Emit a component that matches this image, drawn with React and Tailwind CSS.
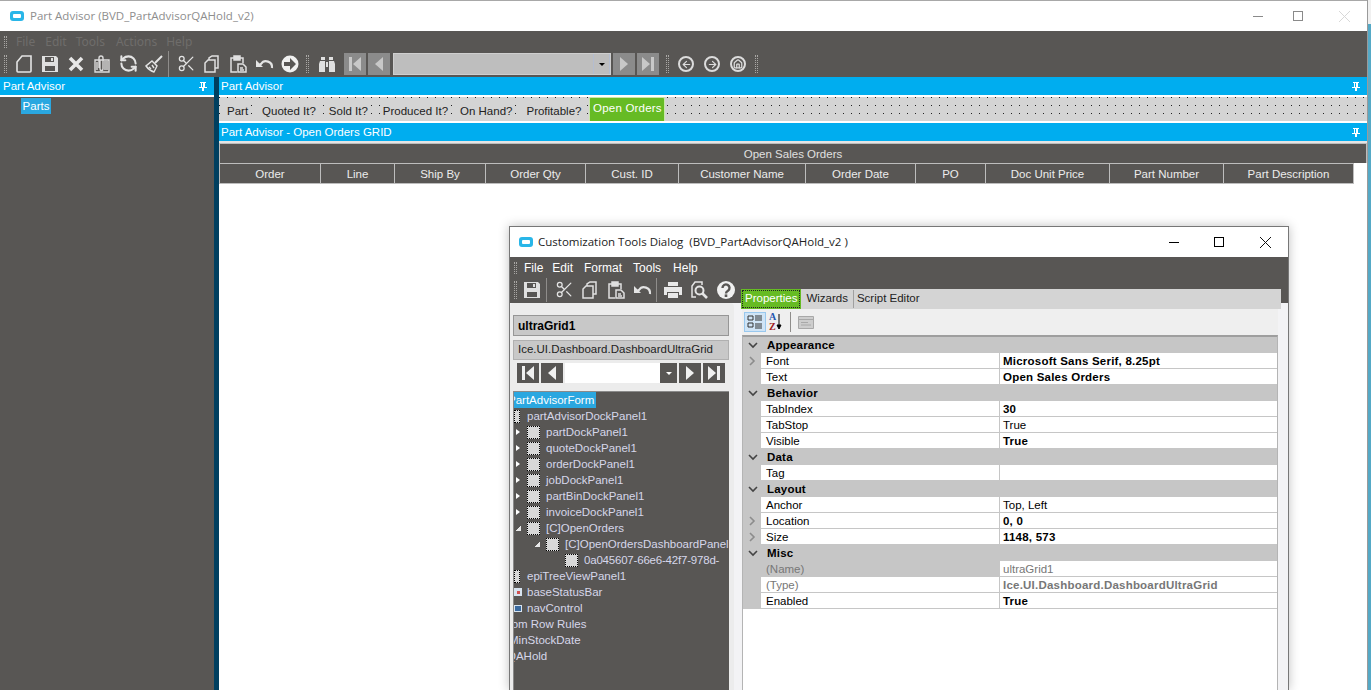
import React from 'react'
import { Scissors, RefreshCcw, ArrowLeft, ArrowRight, House } from 'lucide-react'

const ui = "font-['Liberation_Sans',Arial,sans-serif]"

const Grip = ({ className = '' }) => (
  <div className={`w-[3px] border-x border-dotted border-[#a9a7a5] ${className}`} />
)

const Sep = ({ className = '' }) => <div className={`w-px bg-[#8f8d8b] ${className}`} />

// toolbar glyphs, all on a 20 box
const NewIcon = () => (
  <svg width="20" height="20" viewBox="0 0 20 20" fill="none" stroke="#e4e4e4" strokeWidth="1.6">
    <path d="M8 2h9v15a1 1 0 0 1-1 1H4a1 1 0 0 1-1-1V8z" />
  </svg>
)
const SaveIcon = () => (
  <svg width="20" height="20" viewBox="0 0 20 20">
    <path fill="#e0e0e0" d="M2 2h14l2 2v14H2z" />
    <path fill="#585654" d="M5 3h9v5H5zM5 12h10v5H5z" />
    <path fill="#e0e0e0" d="M11 4h2v3h-2z" />
  </svg>
)
const CloseIcon = () => (
  <svg width="20" height="20" viewBox="0 0 20 20" stroke="#e8e8e8" strokeWidth="3.6">
    <path d="M4 4l12 12M16 4L4 16" />
  </svg>
)
const AttachIcon = () => (
  <svg width="20" height="20" viewBox="0 0 20 20" fill="none" stroke="#dcdcdc" strokeWidth="1.4">
    <path d="M3 6h14v12H3z" />
    <path d="M7 14V4a2 2 0 0 1 4 0v11a1.5 1.5 0 0 1-3 0V6" />
    <path d="M13 7v9M15 7v9M5 8v8" />
  </svg>
)
const BroomIcon = () => (
  <svg width="20" height="20" viewBox="0 0 20 20" fill="none" stroke="#e4e4e4" strokeWidth="1.4">
    <path d="M18 2l-7 7" strokeWidth="2" />
    <path d="M8 7l5 5-3 6c-3-1-6-3-8-6z" />
    <path d="M5 13l2 2M8 11l2 3" />
  </svg>
)
const CopyIcon = () => (
  <svg width="20" height="20" viewBox="0 0 20 20" fill="none" stroke="#e0e0e0" strokeWidth="1.5">
    <path d="M7 6V4l3-2h6v12h-3" />
    <path d="M6 6h7v12H3V9z" />
  </svg>
)
const PasteIcon = () => (
  <svg width="20" height="20" viewBox="0 0 20 20" fill="none" stroke="#e0e0e0" strokeWidth="1.5">
    <path d="M9 18H3V4h3M12 4h3v5" />
    <path d="M6 2h6v4H6z" fill="#e0e0e0" />
    <path d="M10 10h5l3 3v5h-8z" />
    <path d="M12 14h3M12 16h4" />
  </svg>
)
const UndoIcon = () => (
  <svg width="20" height="20" viewBox="0 0 20 20" fill="none" stroke="#e4e4e4" strokeWidth="2.2">
    <path d="M18 14a6 6 0 0 0-11-4L4 12" />
    <path d="M2 6v7h7" fill="#e4e4e4" stroke="none" />
  </svg>
)
const ForwardIcon = () => (
  <svg width="20" height="20" viewBox="0 0 20 20">
    <circle cx="10" cy="10" r="8.5" fill="#f0f0f0" />
    <path fill="#585654" d="M10 4l6 6-6 6v-4H4V8h6z" />
  </svg>
)
const BinocularsIcon = () => (
  <svg width="20" height="20" viewBox="0 0 20 20" fill="#e0e0e0">
    <path d="M4 3h4v3H4zM12 3h4v3h-4z" />
    <path d="M3 7h5v11H2V10zM12 7h5l1 3v8h-6z" />
    <path d="M9 8h2v5H9z" />
  </svg>
)
const PrintIcon = () => (
  <svg width="20" height="20" viewBox="0 0 20 20" fill="#e8e8e8">
    <path d="M5 2h10v4H5zM1 7h18v8h-3v-3H4v3H1z" />
    <path d="M5 13h10v5H5z" />
  </svg>
)
const PreviewIcon = () => (
  <svg width="20" height="20" viewBox="0 0 20 20" fill="none" stroke="#e4e4e4" strokeWidth="1.5">
    <path d="M7 17H3V6l3-4h7v3" />
    <circle cx="10.5" cy="10.5" r="4" strokeWidth="2" />
    <path d="M13.5 13.5L18 18" strokeWidth="2.6" />
  </svg>
)
const HelpIcon = () => (
  <svg width="20" height="20" viewBox="0 0 20 20">
    <circle cx="10" cy="10" r="9" fill="#f0f0f0" />
    <path d="M6.5 8a3.5 3.5 0 1 1 5.5 2.8c-1.3.8-2 1.2-2 2.7" fill="none" stroke="#585654" strokeWidth="2.4" />
    <path fill="#585654" d="M8.7 14.4h2.6V17H8.7z" />
  </svg>
)
const DockPin = () => (
  <svg width="8" height="9" viewBox="0 0 8 9" fill="white">
    <path d="M1 0h6v1H6v4h2v1H5v3H3V6H0V5h2V1H1zM3 1v4h1V1z" />
  </svg>
)
const RoundNav = ({ children }) => (
  <span className="flex h-4 w-4 items-center justify-center rounded-full border-2 border-[#dcdcdc] text-[#dcdcdc]">
    {children}
  </span>
)

const Tool = ({ children }) => <div className="flex w-[26px] justify-center">{children}</div>

const AppLogo = () => (
  <span className="flex h-[10px] w-[14px] items-center justify-center rounded-[3px] bg-[#29b6e8]">
    <span className="h-1 w-2 rounded-[1px] bg-white" />
  </span>
)

// nav glyphs used by both the main window and the dialog
const First = ({ color }) => (
  <svg width="14" height="14" viewBox="0 0 14 14" fill={color}>
    <path d="M1 0h3v14H1zM13 0v14L5 7z" />
  </svg>
)
const Prev = ({ color }) => (
  <svg width="14" height="14" viewBox="0 0 14 14" fill={color}>
    <path d="M11 0v14L3 7z" />
  </svg>
)
const Next = ({ color }) => (
  <svg width="14" height="14" viewBox="0 0 14 14" fill={color}>
    <path d="M3 0v14l8-7z" />
  </svg>
)
const Last = ({ color }) => (
  <svg width="14" height="14" viewBox="0 0 14 14" fill={color}>
    <path d="M1 0v14l8-7zM10 0h3v14h-3z" />
  </svg>
)

const BlueBar = ({ title, className = 'pl-[2px]' }) => (
  <div className={`flex h-[18px] items-center justify-between bg-[#00adef] pr-[7px] pt-[1px] text-[11.5px] text-white ${className}`}>
    <span>{title}</span>
    <DockPin />
  </div>
)

const tabs = [
  ['Part', 'ml-0'],
  ['Quoted It?', 'ml-[8px]'],
  ['Sold It?', 'ml-[7px]'],
  ['Produced It?', 'ml-[9px]'],
  ['On Hand?', 'ml-[6px]'],
  ['Profitable?', 'ml-[8px]'],
]

const columns = [
  ['Order', 102],
  ['Line', 74],
  ['Ship By', 91],
  ['Order Qty', 100],
  ['Cust. ID', 93],
  ['Customer Name', 127],
  ['Order Date', 110],
  ['PO', 70],
  ['Doc Unit Price', 124],
  ['Part Number', 114],
  ['Part Description', 130],
]

function MainWindow() {
  return (
    <div className="flex h-[690px] w-[1367px] shrink-0 flex-col border-t border-[#a8a8a8] bg-white">
      {/* title bar */}
      <div className="flex h-[30px] shrink-0 items-center pl-[10px] text-[11.5px] text-[#8e8e8e] font-['Open_Sans',sans-serif]">
        <AppLogo />
        <span className="ml-[6px]">Part Advisor (BVD_PartAdvisorQAHold_v2)</span>
        <div className="ml-auto flex items-center text-[#8a8a8a]">
          <span className="mr-[30px] h-px w-[10px] bg-[#8a8a8a]" />
          <span className="mr-[36px] h-[10px] w-[10px] border border-[#8a8a8a]" />
          <svg className="mr-[17px]" width="11" height="11" viewBox="0 0 11 11" stroke="#d8d8d8">
            <path d="M0 0l11 11M11 0L0 11" />
          </svg>
        </div>
      </div>

      {/* menu + toolbar */}
      <div className="h-[46px] shrink-0 bg-[#585654]">
        <div className="flex h-[20px] items-center pl-1 pt-[2px] text-[12px] text-[#6f6d6b]">
          <Grip className="h-[12px]" />
          <span className="ml-[9px]">File</span>
          <span className="ml-[10px]">Edit</span>
          <span className="ml-[9px]">Tools</span>
          <span className="ml-[11px]">Actions</span>
          <span className="ml-[9px]">Help</span>
        </div>
        <div className="flex h-[26px] items-center pl-1">
          <Grip className="h-[18px]" />
          <div className="ml-[4px] flex">
            <Tool><NewIcon /></Tool>
            <Tool><SaveIcon /></Tool>
            <Tool><CloseIcon /></Tool>
            <Tool><AttachIcon /></Tool>
            <Tool><RefreshCcw size={19} strokeWidth={2.6} color="#e4e4e4" /></Tool>
            <Tool><BroomIcon /></Tool>
          </div>
          <Sep className="ml-[1px] h-[26px]" />
          <div className="ml-[4px] flex">
            <Tool><Scissors size={19} strokeWidth={1.6} color="#e4e4e4" /></Tool>
            <Tool><CopyIcon /></Tool>
            <Tool><PasteIcon /></Tool>
            <Tool><UndoIcon /></Tool>
            <Tool><ForwardIcon /></Tool>
          </div>
          <Grip className="ml-[3px] h-[18px]" />
          <div className="ml-[5px]"><Tool><BinocularsIcon /></Tool></div>
          <div className="ml-[4px] flex gap-[2px]">
            <NavBtn><First color="#c8c8c8" /></NavBtn>
            <NavBtn><Prev color="#c8c8c8" /></NavBtn>
          </div>
          <div className="ml-[3px] flex h-[22px] w-[218px] justify-end border border-[#cfcfcf] bg-[#bebebe]">
            <div className="flex w-[17px] items-center justify-center border-x border-[#b4bdd0]">
              <span className="border-x-[3px] border-t-[3px] border-x-transparent border-t-black" />
            </div>
          </div>
          <div className="ml-[2px] flex gap-[2px]">
            <NavBtn><Next color="#c8c8c8" /></NavBtn>
            <NavBtn><Last color="#c8c8c8" /></NavBtn>
          </div>
          <Grip className="ml-[7px] h-[18px]" />
          <div className="ml-[9px] flex gap-[10px]">
            <RoundNav><ArrowLeft size={11} strokeWidth={2.5} /></RoundNav>
            <RoundNav><ArrowRight size={11} strokeWidth={2.5} /></RoundNav>
            <RoundNav><House size={10} strokeWidth={3} /></RoundNav>
          </div>
          <Grip className="ml-[9px] h-[18px]" />
        </div>
      </div>

      <div className={`flex min-h-0 flex-1 ${ui}`}>
        {/* left dock */}
        <div className="flex w-[214px] shrink-0 flex-col">
          <BlueBar title="Part Advisor" className="pl-[3px]" />
          <div className="flex-1 border-t-2 border-white bg-[#585654] pl-[21px] pt-[1px]">
            <span className="block w-[30px] bg-[#2aa7e0] py-[1px] text-center text-[11.5px] leading-[14px] text-white">Parts</span>
          </div>
        </div>
        <div className="w-[5px] shrink-0 bg-[#003f5f]" />

        {/* right dock */}
        <div className="flex min-w-0 flex-1 flex-col">
          <BlueBar title="Part Advisor" />
          <div className="h-[2px] bg-white" />
          <div className="h-[24px] bg-[#d4d4d4] bg-[radial-gradient(circle_at_0.5px_0.5px,#222_0.5px,transparent_0.6px)] bg-[length:8px_8px] text-[11.5px] text-[#222]">
            <div className="flex h-full items-end pb-[3px] pl-[5px]">
              {tabs.map(([label, gap]) => (
                <span key={label} className={`bg-[#d4d4d4] px-[3px] leading-[14px] ${gap}`}>{label}</span>
              ))}
              <span className="ml-[5px] -mb-[3px] flex h-[24px] w-[76px] items-center justify-center rounded-t-[2px] border border-b-0 border-[#c9e8a8] bg-[#66bb24] pb-[2px] tracking-[0.2px] text-white">
                Open Orders
              </span>
            </div>
          </div>
          <div className="h-[2px] bg-white" />
          <BlueBar title="Part Advisor - Open Orders GRID" />
          <div className="h-[2px] bg-[#e4e4e4]" />
          <div className="flex h-[20px] items-center justify-center border-x border-t border-[#bdbdbd] bg-[#585654] pt-[2px] text-[11.5px] text-[#e0e0e0]">
            Open Sales Orders
          </div>
          <div className="flex h-[21px]">
            {columns.map(([label, w]) => (
              <div
                key={label}
                className="flex items-center justify-center border-y border-r border-[#bdbdbd] bg-[#585654] pt-[2px] text-[11.5px] text-[#ececec] first:border-l"
                style={{ width: w }}
              >
                {label}
              </div>
            ))}
          </div>
        </div>
      </div>
    </div>
  )
}

const NavBtn = ({ children }) => (
  <div className="flex h-[22px] w-[22px] items-center justify-center bg-[#8b8b8b]">{children}</div>
)
const DarkBtn = ({ children }) => (
  <div className="flex h-[20px] w-[22px] items-center justify-center bg-[#585654]">{children}</div>
)

const Box = () => (
  <span className="h-[13px] w-[13px] shrink-0 border border-dotted border-black bg-[#d8d8d8]" />
)

const tree = [
  { label: 'partDockPanel1', arrow: 'right' },
  { label: 'quoteDockPanel1', arrow: 'right' },
  { label: 'orderDockPanel1', arrow: 'right' },
  { label: 'jobDockPanel1', arrow: 'right' },
  { label: 'partBinDockPanel1', arrow: 'right' },
  { label: 'invoiceDockPanel1', arrow: 'right' },
  { label: '[C]OpenOrders', arrow: 'open' },
  { label: '[C]OpenOrdersDashboardPanel', arrow: 'open', extra: 19 },
  { label: '0a045607-66e6-42f7-978d-', extra: 38, tight: true },
]

function TreeRow({ row }) {
  return (
    <div className="relative flex h-4 items-center whitespace-nowrap text-[#d6d6ea]">
      {row.arrow === 'right' && (
        <span className="absolute left-[2px] border-y-[3px] border-l-[4px] border-y-transparent border-l-white" />
      )}
      {row.arrow === 'open' && (
        <span className="absolute h-[5px] w-[5px] bg-[linear-gradient(135deg,transparent_50%,#e8e8e8_50%)]" style={{ left: 2 + (row.extra || 0) }} />
      )}
      <span className="flex items-center" style={{ marginLeft: 13 + (row.extra || 0) }}>
        <Box />
        <span className={`ml-[6px] ${row.tight ? 'tracking-[-0.2px]' : ''}`}>{row.label}</span>
      </span>
    </div>
  )
}

const groups = [
  { name: 'Appearance', rows: [
    { k: 'Font', v: 'Microsoft Sans Serif, 8.25pt', bold: true, more: true },
    { k: 'Text', v: 'Open Sales Orders', bold: true },
  ] },
  { name: 'Behavior', rows: [
    { k: 'TabIndex', v: '30', bold: true },
    { k: 'TabStop', v: 'True' },
    { k: 'Visible', v: 'True', bold: true },
  ] },
  { name: 'Data', rows: [{ k: 'Tag', v: '' }] },
  { name: 'Layout', rows: [
    { k: 'Anchor', v: 'Top, Left' },
    { k: 'Location', v: '0, 0', bold: true, more: true },
    { k: 'Size', v: '1148, 573', bold: true, more: true },
  ] },
  { name: 'Misc', rows: [
    { k: '(Name)', v: 'ultraGrid1', muted: true, greyName: true },
    { k: '(Type)', v: 'Ice.UI.Dashboard.DashboardUltraGrid', muted: true, bold: true },
    { k: 'Enabled', v: 'True', bold: true },
  ] },
]

const Chevron = ({ dir }) => (
  <svg width="10" height="10" viewBox="0 0 10 10" fill="none" stroke={dir === 'down' ? '#444' : '#8c8c8c'} strokeWidth="1.6">
    <path d={dir === 'down' ? 'M1 3l4 4 4-4' : 'M3 1l4 4-4 4'} />
  </svg>
)

function PropertyGrid() {
  return (
    <div className="h-full border-x border-t-2 border-x-[#b4b4b4] border-t-[#9e9e9e] bg-white text-[11.5px] leading-4">
      {groups.map((g) => (
        <div key={g.name}>
          <div className="flex h-4 bg-[#c6c6c6]">
            <span className="flex w-[19px] items-center justify-center"><Chevron dir="down" /></span>
            <span className="ml-[5px] font-bold tracking-[0.2px] text-black">{g.name}</span>
          </div>
          {g.rows.map((r) => (
            <div key={r.k} className="flex h-4">
              <span className="flex w-[18px] items-center justify-center bg-[#c6c6c6]">
                {r.more && <Chevron dir="right" />}
              </span>
              <span className={`w-[239px] border-b border-r border-[#c6c6c6] pl-[5px] ${r.muted ? 'text-[#777]' : 'text-black'} ${r.greyName ? 'bg-[#c6c6c6]' : 'bg-white'}`}>
                {r.k}
              </span>
              <span className={`flex-1 border-b border-[#c6c6c6] bg-white pl-[3px] ${r.muted ? 'text-[#777]' : 'text-black'} ${r.bold ? 'font-bold tracking-[0.22px]' : ''}`}>
                {r.v}
              </span>
            </div>
          ))}
        </div>
      ))}
    </div>
  )
}

function DialogWindow() {
  return (
    <div className={`absolute left-[509px] top-[226px] flex h-[464px] w-[780px] flex-col border-x border-t border-[#777] bg-white shadow-[0_0_10px_rgba(0,0,0,0.25)] ${ui}`}>
      <div className="flex h-[30px] shrink-0 items-center pl-[9px] text-[11.5px] text-[#222] font-['Open_Sans',sans-serif]">
        <AppLogo />
        <span className="ml-[5px] whitespace-pre">Customization Tools Dialog  (BVD_PartAdvisorQAHold_v2 )</span>
        <div className="ml-auto flex items-center">
          <span className="mr-[35px] h-px w-[10px] bg-black" />
          <span className="mr-[36px] h-[10px] w-[10px] border border-black" />
          <svg className="mr-[17px]" width="11" height="11" viewBox="0 0 11 11" stroke="#111">
            <path d="M0 0l11 11M11 0L0 11" />
          </svg>
        </div>
      </div>

      <div className="relative h-[46px] shrink-0 bg-[#585654]">
        <div className="flex h-[22px] items-center pl-1 text-[12px] text-white">
          <Grip className="h-[12px]" />
          <span className="ml-[7px]">File</span>
          <span className="ml-[9px]">Edit</span>
          <span className="ml-[11px]">Format</span>
          <span className="ml-[11px]">Tools</span>
          <span className="ml-[12px]">Help</span>
        </div>
        <div className="flex h-[24px] items-center pb-[2px] pl-1">
          <Grip className="h-[18px]" />
          <div className="ml-[2px]"><Tool><SaveIcon /></Tool></div>
          <Sep className="ml-[1px] h-[24px]" />
          <div className="ml-[4px] flex">
            <Tool><Scissors size={19} strokeWidth={1.6} color="#e4e4e4" /></Tool>
            <Tool><CopyIcon /></Tool>
            <Tool><PasteIcon /></Tool>
            <Tool><UndoIcon /></Tool>
          </div>
          <Sep className="ml-[1px] h-[24px]" />
          <div className="ml-[3px] flex">
            <Tool><PrintIcon /></Tool>
            <Tool><PreviewIcon /></Tool>
            <div className="ml-[1px]"><Tool><HelpIcon /></Tool></div>
          </div>
        </div>
      </div>

      <div className="flex min-h-0 flex-1 bg-[#f3f3f5]">
        {/* component tree */}
        <div className="flex w-[224px] shrink-0 flex-col rounded-t-[4px] bg-[#ececec] pl-[3px] pr-[5px] pt-[12px]">
          <div className="flex h-[21px] items-center border border-[#969696] bg-[#c8c8c8] pl-1 text-[12px] font-bold text-black">ultraGrid1</div>
          <div className="mt-[4px] flex h-[20px] items-center border border-[#b0b0b0] bg-[#c8c8c8] pl-1 text-[11.5px] text-[#222]">Ice.UI.Dashboard.DashboardUltraGrid</div>
          <div className="mt-[3px] flex h-[20px] gap-[2px] px-1">
            <DarkBtn><First color="#f0f0f0" /></DarkBtn>
            <DarkBtn><Prev color="#f0f0f0" /></DarkBtn>
            <div className="flex flex-1 justify-end bg-white pl-[1px]">
              <div className="flex w-[17px] items-center justify-center bg-[#585654]">
                <span className="border-x-[3px] border-t-[3px] border-x-transparent border-t-white" />
              </div>
            </div>
            <DarkBtn><Next color="#f0f0f0" /></DarkBtn>
            <DarkBtn><Last color="#f0f0f0" /></DarkBtn>
          </div>
          <div className="mt-[8px] min-h-0 flex-1 overflow-hidden border-l border-t border-[#8a8a8a] bg-[#585654] text-[11.5px] leading-4 text-[#d6d6ea]">
            <div className="h-4 w-[82px] overflow-hidden whitespace-nowrap bg-[#2aa7e0] text-white">
              <span className="-ml-[6px] inline-block">PartAdvisorForm</span>
            </div>
            <div className="flex h-4 items-center whitespace-nowrap">
              <span className="h-[13px] w-[6px] border border-dotted border-black bg-[#d8d8d8]" />
              <span className="ml-[7px]">partAdvisorDockPanel1</span>
            </div>
            {tree.map((row) => <TreeRow key={row.label} row={row} />)}
            <div className="flex h-4 items-center whitespace-nowrap">
              <span className="h-[13px] w-[6px] border border-dotted border-black bg-[#d8d8d8]" />
              <span className="ml-[7px]">epiTreeViewPanel1</span>
            </div>
            <div className="flex h-4 items-center whitespace-nowrap">
              <span className="flex h-[8px] w-[8px] items-center justify-center bg-[#d8e4f0]"><span className="h-[3px] w-[3px] bg-[#d05050]" /></span>
              <span className="ml-[5px]">baseStatusBar</span>
            </div>
            <div className="flex h-4 items-center whitespace-nowrap">
              <span className="h-[7px] w-[8px] border border-[#d8e4f0] bg-[#3a6aa0]" />
              <span className="ml-[5px]">navControl</span>
            </div>
            <div className="h-4 whitespace-nowrap"><span className="-ml-[26px] inline-block">Custom Row Rules</span></div>
            <div className="h-4 whitespace-nowrap"><span className="-ml-[5px] inline-block">MinStockDate</span></div>
            <div className="h-4 whitespace-nowrap"><span className="-ml-[7px] inline-block">QAHold</span></div>
          </div>
        </div>

        {/* properties */}
        <div className="relative flex min-w-0 flex-1 flex-col pl-[8px] pr-[10px]">
          <div className="absolute -top-[14px] left-[7px] right-[7px] flex h-[20px] items-center bg-[#d4d4d4] text-[11.5px] text-[#222]">
            <span className="flex h-full items-center border-2 border-[#66bb24] bg-[#66bb24] px-[2px] text-white outline-1 -outline-offset-2 outline-dotted outline-[#222]">Properties</span>
            <span className="border-r border-[#a0a0a0] px-[5px]">Wizards</span>
            <span className="pl-[3px]">Script Editor</span>
          </div>
          <div className="flex h-[32px] shrink-0 items-center bg-[#efefef] pl-[2px] pt-[6px]">
            <div className="flex h-[20px] w-[22px] items-center justify-center border border-[#99c8ee] bg-[#cfe4f6]">
              <svg width="16" height="16" viewBox="0 0 16 16" stroke="#333" fill="none">
                <path d="M1 2h5v4H1zM1 9h5v4H1zM8 2h7M8 4h7M8 6h7M8 10h7M8 12h7M8 14h7" />
              </svg>
            </div>
            <span className="ml-[3px] flex items-center">
              <span className="text-[10px] font-bold leading-[10px] font-['Liberation_Serif',serif]">
                <span className="block text-[#2456b0]">A</span>
                <span className="block text-[#a02020]">Z</span>
              </span>
              <svg width="6" height="18" viewBox="0 0 6 18" stroke="black" fill="black">
                <path d="M3 1v13M1 12h4l-2 4z" />
              </svg>
            </span>
            <Sep className="ml-[8px] h-[20px]" />
            <svg className="ml-[7px]" width="16" height="16" viewBox="0 0 16 16" fill="#cdcdcd" stroke="#a8a8a8">
              <path d="M.5 2.5h15v12H.5zM.5 5.5h15M3 8.5h7M3 11h10" />
            </svg>
          </div>
          <div className="min-h-0 flex-1">
            <PropertyGrid />
          </div>
        </div>
      </div>
    </div>
  )
}

export default function App() {
  return (
    <div className="relative flex h-[690px] w-[1371px] overflow-hidden bg-white">
      <MainWindow />
      {/* desktop sliver behind the main window */}
      <div className="flex flex-1 flex-col border-l border-[#9a9a9a]">
        <div className="h-[24px] bg-[#f0f0f0]" />
        <div className="flex-1 bg-[#55a9c6]" />
      </div>
      <DialogWindow />
    </div>
  )
}
